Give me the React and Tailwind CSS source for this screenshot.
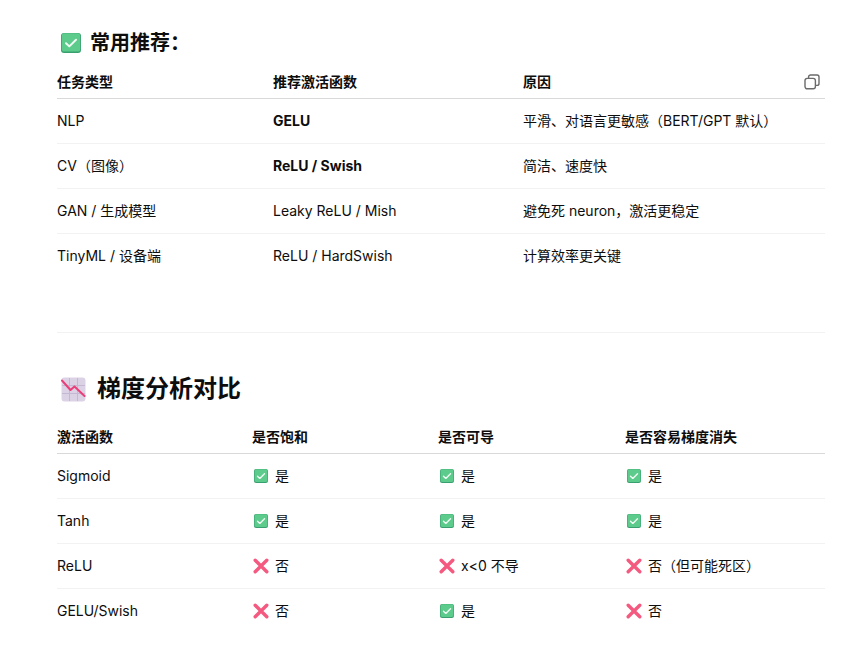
const font = {
  fontFamily: 'Inter, "Noto Sans CJK SC", sans-serif',
};

const Check = ({ size = 14 }) => (
  <svg width={size} height={size} viewBox="0 0 20 20" className="shrink-0">
    <rect x="0" y="0" width="20" height="20" rx="3" fill="#3a9f70" />
    <rect x="0.8" y="0.2" width="18.4" height="18.4" rx="2.6" fill="#5ccb8b" />
    <path d="M5 10.2l3.3 3.2 6.7-6.6" fill="none" stroke="#f2fbf5" strokeWidth="2" strokeLinecap="round" strokeLinejoin="round" />
  </svg>
);

const Cross = () => (
  <svg width="16" height="16" viewBox="0 0 16 16" className="shrink-0 -mx-[1px]">
    <path d="M2.2 2.2l11.6 11.6M13.8 2.2L2.2 13.8" stroke="#f4597f" strokeWidth="3.4" strokeLinecap="round" />
  </svg>
);

const ChartDown = () => (
  <svg width="25" height="25" viewBox="0 0 25 25" className="shrink-0">
    <rect x="0.5" y="0.5" width="24" height="24" rx="3" fill="#dcd2e6" />
    <path d="M8.5 1v23M16.5 1v23M1 8.5h23M1 16.5h23" stroke="#c4b8d2" strokeWidth="1" />
    <path d="M1 3.5l8.5 9.5 4-3.5 10 9.5" fill="none" stroke="#ea3f78" strokeWidth="2" strokeLinejoin="round" strokeLinecap="round" />
  </svg>
);

const Copy = () => (
  <svg width="16" height="16" viewBox="0 0 16 16" fill="none" stroke="#6b6b6b" strokeWidth="1.4" className="absolute right-[5px] top-[2px]">
    <rect x="1" y="4.4" width="10.4" height="10.4" rx="2.2" />
    <path d="M4.6 4.2V3a2 2 0 0 1 2-2H13a2 2 0 0 1 2 2v6.4a2 2 0 0 1-2 2h-1.4" />
  </svg>
);

const Mark = ({ type, text }) => (
  <span className="flex items-center gap-[7px] pl-[2px]">
    {type === "y" ? <Check /> : <Cross />}
    <span>{text}</span>
  </span>
);

const recommend = [
  ["NLP", "GELU", "平滑、对语言更敏感（BERT/GPT 默认）", true],
  ["CV（图像）", "ReLU / Swish", "简洁、速度快", true],
  ["GAN / 生成模型", "Leaky ReLU / Mish", "避免死 neuron，激活更稳定", false],
  ["TinyML / 设备端", "ReLU / HardSwish", "计算效率更关键", false],
];

const gradients = [
  ["Sigmoid", ["y", "是"], ["y", "是"], ["y", "是"]],
  ["Tanh", ["y", "是"], ["y", "是"], ["y", "是"]],
  ["ReLU", ["n", "否"], ["n", "x<0 不导"], ["n", "否（但可能死区）"]],
  ["GELU/Swish", ["n", "否"], ["y", "是"], ["n", "否"]],
];

export default function App() {
  return (
    <div className="bg-white text-[#0d0d0d] w-[866px] h-[650px] overflow-hidden pl-[57px] pr-[41px] pt-[28px] text-sm" style={font}>
      <h3 className="flex items-center h-[30px] pl-[4px] gap-[9px] text-xl font-bold">
        <Check size={20} />
        <span>常用推荐：</span>
      </h3>

      <table className="w-full table-fixed mt-[9px] border-collapse">
        <thead>
          <tr className="border-b border-[#d9d9d9] h-[31px] text-left">
            <th className="w-[216px] font-bold p-0">任务类型</th>
            <th className="w-[250px] font-bold p-0">推荐激活函数</th>
            <th className="font-bold p-0">
              <div className="relative">
                原因
                <Copy />
              </div>
            </th>
          </tr>
        </thead>
        <tbody>
          {recommend.map((r, i) => (
            <tr key={r[0]} className={`h-[45px] ${i < 3 ? "border-b border-[#f2f2f2]" : ""}`}>
              <td>{r[0]}</td>
              <td className={r[3] ? "font-bold" : ""}>{r[1]}</td>
              <td>{r[2]}</td>
            </tr>
          ))}
        </tbody>
      </table>

      <hr className="mt-[54px] border-[#f2f2f2]" />

      <h3 className="flex items-center h-[36px] mt-[38px] pl-[4px] gap-[11px] text-2xl font-bold">
        <ChartDown />
        <span>梯度分析对比</span>
      </h3>

      <table className="w-full table-fixed mt-[15px] border-collapse">
        <thead>
          <tr className="border-b border-[#d9d9d9] h-[31px] text-left">
            <th className="w-[195px] font-bold p-0">激活函数</th>
            <th className="w-[186px] font-bold p-0">是否饱和</th>
            <th className="w-[187px] font-bold p-0">是否可导</th>
            <th className="font-bold p-0">是否容易梯度消失</th>
          </tr>
        </thead>
        <tbody>
          {gradients.map((r, i) => (
            <tr key={r[0]} className={`h-[45px] ${i < 3 ? "border-b border-[#f2f2f2]" : ""}`}>
              <td>{r[0]}</td>
              {r.slice(1).map((c, j) => (
                <td key={j}>
                  <Mark type={c[0]} text={c[1]} />
                </td>
              ))}
            </tr>
          ))}
        </tbody>
      </table>
    </div>
  );
}
